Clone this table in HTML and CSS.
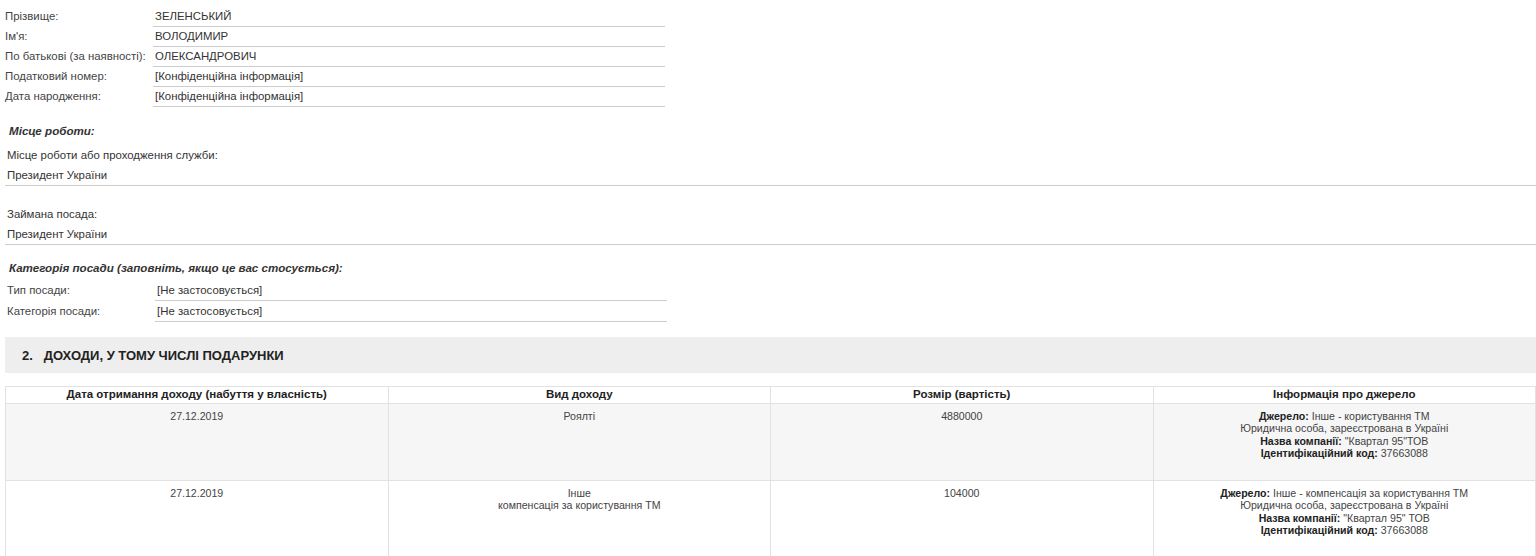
FILE: index.html
```html
<!DOCTYPE html>
<html lang="uk">
<head>
    <meta charset="UTF-8">
    <meta name="viewport" content="width=device-width, initial-scale=1.0">
    <title>Декларація</title>
    <link rel="stylesheet" href="styles.css">
</head>
<body>
    <div class="person">
        <div class="field"><span class="label">Прізвище:</span><span class="value">ЗЕЛЕНСЬКИЙ</span></div>
        <div class="field"><span class="label">Ім'я:</span><span class="value">ВОЛОДИМИР</span></div>
        <div class="field"><span class="label">По батькові (за наявності):</span><span class="value">ОЛЕКСАНДРОВИЧ</span></div>
        <div class="field"><span class="label">Податковий номер:</span><span class="value">[Конфіденційна інформація]</span></div>
        <div class="field"><span class="label">Дата народження:</span><span class="value">[Конфіденційна інформація]</span></div>
    </div>

    <h3 class="subhead">Місце роботи:</h3>
    <div class="block">
        <div class="block-label">Місце роботи або проходження служби:</div>
        <div class="block-value">Президент України</div>
    </div>
    <div class="block">
        <div class="block-label">Займана посада:</div>
        <div class="block-value">Президент України</div>
    </div>

    <h3 class="subhead subhead-tight">Категорія посади (заповніть, якщо це вас стосується):</h3>
    <div class="person shifted">
        <div class="field"><span class="label">Тип посади:</span><span class="value">[Не застосовується]</span></div>
        <div class="field"><span class="label">Категорія посади:</span><span class="value">[Не застосовується]</span></div>
    </div>

    <h2 class="section">2.&nbsp;&nbsp; ДОХОДИ, У ТОМУ ЧИСЛІ ПОДАРУНКИ</h2>

    <table class="income">
        <thead>
            <tr>
                <th>Дата отримання доходу (набуття у власність)</th>
                <th>Вид доходу</th>
                <th>Розмір (вартість)</th>
                <th>Інформація про джерело</th>
            </tr>
        </thead>
        <tbody>
            <tr class="odd">
                <td>27.12.2019</td>
                <td>Роялті</td>
                <td>4880000</td>
                <td><b>Джерело:</b> Інше - користування ТМ<br>Юридична особа, зареєстрована в Україні<br><b>Назва компанії:</b> "Квартал 95"ТОВ<br><b>Ідентифікаційний код:</b> 37663088</td>
            </tr>
            <tr>
                <td>27.12.2019</td>
                <td>Інше<br>компенсація за користування ТМ</td>
                <td>104000</td>
                <td><b>Джерело:</b> Інше - компенсація за користування ТМ<br>Юридична особа, зареєстрована в Україні<br><b>Назва компанії:</b> "Квартал 95" ТОВ<br><b>Ідентифікаційний код:</b> 37663088</td>
            </tr>
        </tbody>
    </table>
</body>
</html>
```

FILE: styles.css
```css
body {
    font-family: "Liberation Sans", Arial, sans-serif;
    font-size: 11.4px;
    color: #333;
    margin: 0;
    padding: 7px 0 0 5px;
    background: #fff;
}
.person {
    width: 660px;
}
.field {
    display: flex;
    height: 20px;
    line-height: 19px;
}
.shifted .field {
    height: 21px;
    line-height: 20px;
}
.label {
    width: 148px;
    flex: none;
    white-space: nowrap;
    color: #444;
}
.value {
    flex: 1;
    padding-left: 2px;
    border-bottom: 1px solid #ccc;
}
.shifted {
    padding-left: 2px;
}
.subhead {
    font-size: 11.6px;
    font-style: italic;
    font-weight: bold;
    margin: 14px 0 4px 4px;
    height: 20px;
    line-height: 20px;
}
.subhead-tight {
    margin-top: 13px;
    margin-bottom: 2px;
}
.block {
    padding-left: 2px;
    border-bottom: 1px solid #ccc;
}
.block + .block {
    margin-top: 18px;
}
.block-label,
.block-value {
    height: 20px;
    line-height: 20px;
}
.section {
    background: #eee;
    font-size: 13px;
    font-weight: bold;
    margin: 15px 0 13px 0;
    height: 36px;
    line-height: 37px;
    padding-left: 17px;
    color: #222;
}
.income {
    width: 100%;
    border-collapse: collapse;
    table-layout: fixed;
    font-size: 11.5px;
}
.income th,
.income td {
    width: 25%;
    border: 1px solid #e2e2e2;
    text-align: center;
    vertical-align: top;
}
.income th {
    height: 16px;
    line-height: 15px;
    padding: 0;
    color: #222;
}
.income td {
    height: 77px;
    padding: 6px 4px 0;
    font-size: 10.6px;
    line-height: 12.3px;
    color: #444;
    box-sizing: border-box;
}
.income td b {
    color: #222;
}
.income tr.odd td {
    background: #f6f6f6;
}
```
